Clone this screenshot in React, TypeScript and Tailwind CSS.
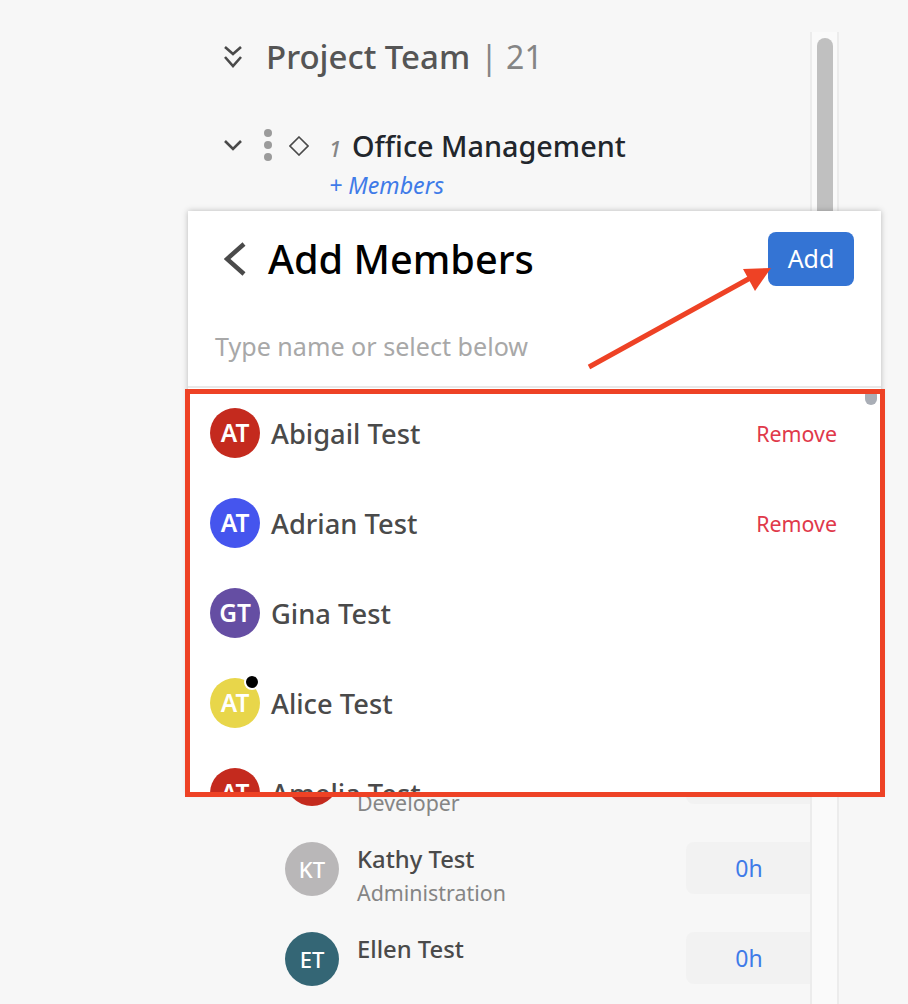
import React from 'react'

const pickerRows = [
  { initials: 'AT', name: 'Abigail Test', color: 'bg-[#c42a1e]', added: true },
  { initials: 'AT', name: 'Adrian Test', color: 'bg-[#4555ee]', added: true },
  { initials: 'GT', name: 'Gina Test', color: 'bg-[#654ea3]' },
  { initials: 'AT', name: 'Alice Test', color: 'bg-[#e8d64a]', online: true },
  { initials: 'AT', name: 'Amelia Test', color: 'bg-[#c42a1e]' },
]

const teamRows = [
  { initials: 'AT', name: 'Amelia Test', role: 'Developer', color: 'bg-[#c42a1e]' },
  { initials: 'KT', name: 'Kathy Test', role: 'Administration', color: 'bg-[#b9b7b8]' },
  { initials: 'ET', name: 'Ellen Test', role: '', color: 'bg-[#346675]' },
]

function TeamRow({ row }: { row: (typeof teamRows)[number] }) {
  return (
    <div className="flex h-[90px] items-start">
      <div className={`flex h-[54px] w-[54px] shrink-0 items-center justify-center rounded-full text-[22px] font-medium text-white ${row.color}`}>
        {row.initials}
      </div>
      <div className="ml-[18px] w-[329px]">
        <div className="text-[23.8px] leading-[34px] font-medium text-[#4a4a4a]">{row.name}</div>
        <div className="text-[21.4px] leading-[34px] text-[#858585]">{row.role}</div>
      </div>
      <div className="flex h-[52px] w-[124px] items-center justify-center rounded-l-lg bg-[#f2f2f2] pl-[2px] text-[23px] text-[#3f7be8]">
        0h
      </div>
    </div>
  )
}

function PickerRow({ row }: { row: (typeof pickerRows)[number] }) {
  return (
    <div className="flex h-[90px] shrink-0 items-center pr-[44px] pl-[22px]">
      <div className={`relative mb-[2px] flex h-[50px] w-[50px] shrink-0 items-center justify-center rounded-full text-[24.5px] font-semibold text-white ${row.color}`}>
        {row.initials}
        {row.online && (
          <span className="absolute top-[-4px] right-0 h-[16px] w-[16px] rounded-full border-[2px] border-white bg-black" />
        )}
      </div>
      <span className="ml-[11px] flex-1 text-[27.3px] font-medium text-[#4a4a4a]">{row.name}</span>
      {row.added && <span className="text-[21.4px] text-[#e0394a]">Remove</span>}
    </div>
  )
}

export default function App() {
  return (
    <div className="relative flex h-[1004px] w-[908px] overflow-hidden bg-[#f7f7f7] font-['Noto_Sans',sans-serif]">
      <div className="w-[810px] shrink-0">
        {/* Team header */}
        <div className="mt-[31px] flex h-[52px] items-center pl-[223px]">
          <svg viewBox="0 0 20 24" className="h-[24px] w-[20px] text-[#4a4a4a]" fill="none" stroke="currentColor" strokeWidth="2.6">
            <path d="M2 2 L10 9 L18 2" />
            <path d="M2 12 L10 21 L18 12" />
          </svg>
          <span className="ml-[23px] text-[33px] font-medium text-[#555555]">Project Team</span>
          <span className="ml-[10px] text-[32px] text-[#858585]">| 21</span>
        </div>

        {/* Group row */}
        <div className="mt-[41px] flex items-start pl-[223px]">
          <svg viewBox="0 0 20 12" className="mt-[15px] h-[12px] w-[20px] text-[#4a4a4a]" fill="none" stroke="currentColor" strokeWidth="2.6">
            <path d="M2 2 L10 10 L18 2" />
          </svg>
          <div className="mt-[5px] ml-[21px] flex w-[8px] flex-col gap-[4px]">
            <span className="h-[8px] w-[8px] rounded-full bg-[#9b9b9b]" />
            <span className="h-[8px] w-[8px] rounded-full bg-[#9b9b9b]" />
            <span className="h-[8px] w-[8px] rounded-full bg-[#9b9b9b]" />
          </div>
          <svg viewBox="0 0 20 20" className="mt-[12px] ml-[17px] h-[20px] w-[20px] text-[#4a4a4a]" fill="none" stroke="currentColor" strokeWidth="1.6">
            <path d="M10 1 L19 10 L10 19 L1 10 Z" />
          </svg>
          <div className="ml-[20px]">
            <div className="flex items-baseline">
              <span className="w-[23px] text-[22px] font-medium text-[#858585] italic">1</span>
              <span className="text-[28.8px] leading-[44px] font-medium text-[#22262c]">Office Management</span>
            </div>
            <div className="mt-[1px] text-[23.2px] leading-[32px] text-[#3f7be8] italic">+ Members</div>
          </div>
        </div>

        {/* Team rows */}
        <div className="mt-[551px] pl-[285px]">
          {teamRows.map((row) => (
            <TeamRow key={row.name} row={row} />
          ))}
        </div>
      </div>

      {/* Scroll track */}
      <div className="mt-[32px] w-[29px] shrink-0 border-x-2 border-[#ececec] bg-[#fafafa] pt-[6px] pl-[5px]">
        <div className="h-[240px] w-[16px] rounded-full bg-[#c0c0c0]" />
      </div>

      {/* Add members popover */}
      <div className="absolute top-[211px] left-[188px] flex h-[582px] w-[693px] flex-col overflow-hidden bg-white shadow-[0_0_6px_rgba(0,0,0,0.25)]">
        <div className="flex h-[177px] shrink-0 flex-col border-b-2 border-[#e8e8e8]">
          <div className="flex items-start pt-[21px] pr-[27px] pl-[36px]">
            <svg viewBox="0 0 22 34" className="mt-[10px] h-[34px] w-[22px] text-[#4a4a4a]" fill="none" stroke="currentColor" strokeWidth="4.5">
              <path d="M20 2 L3 17 L20 32" />
            </svg>
            <span className="ml-[22px] flex-1 text-[39.7px] leading-[54px] font-medium text-black">Add Members</span>
            <button className="h-[54px] w-[86px] rounded-lg bg-[#3474d4] text-[25px] text-white">Add</button>
          </div>
          <div className="mt-[42px] pl-[27px] text-[25.1px] text-[#a8a8a8]">Type name or select below</div>
        </div>
        <div className="relative flex flex-col pt-[1px]">
          {pickerRows.map((row) => (
            <PickerRow key={row.name} row={row} />
          ))}
          <div className="absolute top-[1px] right-[4px] h-[16px] w-[12px] rounded-full bg-[#a9aeb6]" />
        </div>
      </div>

      {/* Annotation */}
      <div className="absolute top-[389px] left-[185px] h-[408px] w-[700px] border-[5px] border-[#ee4225]" />
      <svg className="absolute top-0 left-0 h-[1004px] w-[908px]" viewBox="0 0 908 1004" fill="none">
        <path d="M589 367 L752 277" stroke="#ee4225" strokeWidth="5" />
        <path d="M743 269 L771 268 L755 291 Z" fill="#ee4225" />
      </svg>
    </div>
  )
}
